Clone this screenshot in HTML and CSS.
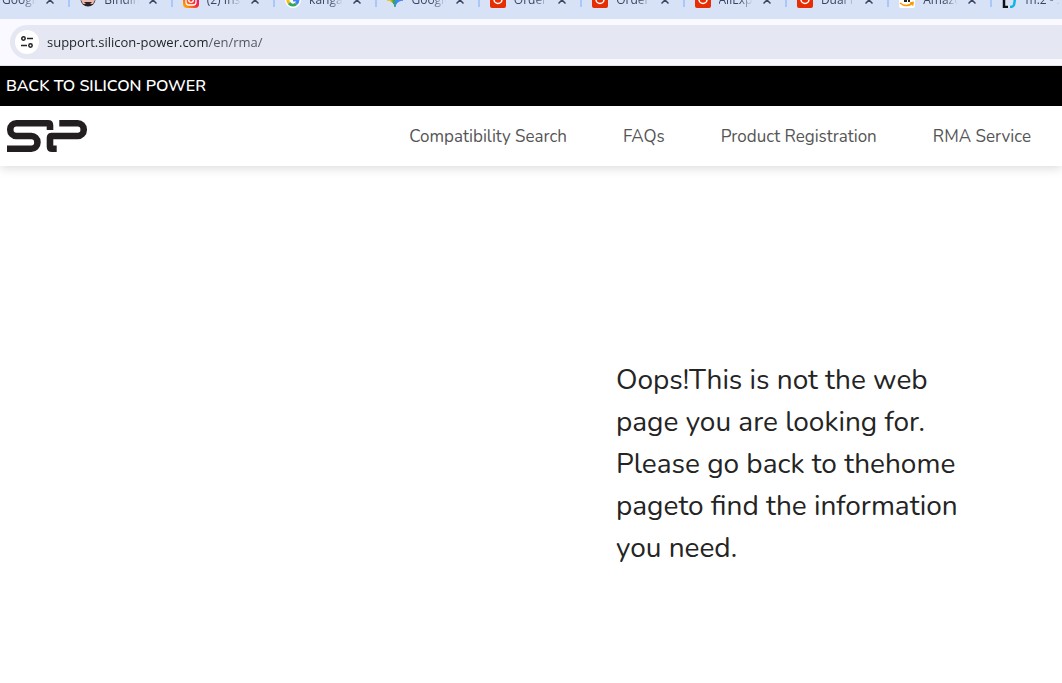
FILE: index.html
```html
<!DOCTYPE html>
<html lang="en">
<head>
    <meta charset="UTF-8">
    <meta name="viewport" content="width=device-width, initial-scale=1">
    <title>Silicon Power Support</title>
    <link rel="stylesheet" href="styles.css">
</head>
<body>

<div class="browser">
    <div class="tabs">
        <div class="tab">
            <span class="tab-icon"></span>
            <span class="tab-title">Google</span>
            <button class="tab-close" aria-label="Close tab"><svg viewBox="0 0 8 8"><path d="M0.5 0.5l7 7M7.5 0.5l-7 7"/></svg></button>
        </div>
        <div class="tab">
            <svg class="tab-icon" viewBox="0 0 16 16"><circle cx="8" cy="7" r="7.5" fill="#2b2226"/><path d="M1 8h14l-2 4H3z" fill="#e8b9ac"/><path d="M4 10h8l-2 2H6z" fill="#2b2226"/></svg>
            <span class="tab-title">Binding</span>
            <button class="tab-close" aria-label="Close tab"><svg viewBox="0 0 8 8"><path d="M0.5 0.5l7 7M7.5 0.5l-7 7"/></svg></button>
        </div>
        <div class="tab">
            <svg class="tab-icon" viewBox="0 0 16 16">
                <defs><linearGradient id="insta" x1="0" y1="1" x2="1" y2="0"><stop offset="0" stop-color="#ffc400"/><stop offset="0.5" stop-color="#ff2b2b"/><stop offset="1" stop-color="#d000c8"/></linearGradient></defs>
                <rect width="16" height="16" rx="4" fill="url(#insta)"/>
                <rect x="3" y="3" width="10" height="10" rx="3" fill="none" stroke="#fff" stroke-width="1.3"/>
                <circle cx="8" cy="8" r="2.3" fill="none" stroke="#fff" stroke-width="1.3"/>
            </svg>
            <span class="tab-title">(2) Instagram</span>
            <button class="tab-close" aria-label="Close tab"><svg viewBox="0 0 8 8"><path d="M0.5 0.5l7 7M7.5 0.5l-7 7"/></svg></button>
        </div>
        <div class="tab">
            <svg class="tab-icon" viewBox="0 0 16 16">
                <circle cx="8" cy="8" r="8" fill="#fff"/>
                <g fill="none" stroke-width="3">
                    <path d="M3.5 5.5a5 5 0 0 1 8-2" stroke="#ea4335"/>
                    <path d="M3.5 5.5a5 5 0 0 0 .5 5.5" stroke="#fbbc05"/>
                    <path d="M4 11a5 5 0 0 0 7 1" stroke="#34a853"/>
                    <path d="M11 12a5 5 0 0 0 2-4H8" stroke="#4285f4"/>
                </g>
            </svg>
            <span class="tab-title">kangaroo</span>
            <button class="tab-close" aria-label="Close tab"><svg viewBox="0 0 8 8"><path d="M0.5 0.5l7 7M7.5 0.5l-7 7"/></svg></button>
        </div>
        <div class="tab">
            <svg class="tab-icon" viewBox="0 0 16 16">
                <defs><linearGradient id="gem"><stop offset="0.2" stop-color="#fbbc05"/><stop offset="0.4" stop-color="#34a853"/><stop offset="0.6" stop-color="#4285f4"/></linearGradient></defs>
                <path d="M8 0Q9 7 16 8Q9 9 8 15Q7 9 0 8Q7 7 8 0z" fill="url(#gem)" stroke="url(#gem)"/>
            </svg>
            <span class="tab-title">Google</span>
            <button class="tab-close" aria-label="Close tab"><svg viewBox="0 0 8 8"><path d="M0.5 0.5l7 7M7.5 0.5l-7 7"/></svg></button>
        </div>
        <div class="tab">
            <svg class="tab-icon" viewBox="0 0 16 16"><rect width="16" height="16" rx="2" fill="#e62e04"/><path d="M4 6v1.500a4 4 0 0 0 8 0V6" fill="none" stroke="#fff" stroke-width="1.5"/></svg>
            <span class="tab-title">Order Details</span>
            <button class="tab-close" aria-label="Close tab"><svg viewBox="0 0 8 8"><path d="M0.5 0.5l7 7M7.5 0.5l-7 7"/></svg></button>
        </div>
        <div class="tab">
            <svg class="tab-icon" viewBox="0 0 16 16"><rect width="16" height="16" rx="2" fill="#e62e04"/><path d="M4 6v1.500a4 4 0 0 0 8 0V6" fill="none" stroke="#fff" stroke-width="1.5"/></svg>
            <span class="tab-title">Order Details</span>
            <button class="tab-close" aria-label="Close tab"><svg viewBox="0 0 8 8"><path d="M0.5 0.5l7 7M7.5 0.5l-7 7"/></svg></button>
        </div>
        <div class="tab">
            <svg class="tab-icon" viewBox="0 0 16 16"><rect width="16" height="16" rx="2" fill="#e62e04"/><path d="M4 6v1.500a4 4 0 0 0 8 0V6" fill="none" stroke="#fff" stroke-width="1.5"/></svg>
            <span class="tab-title">AliExpress</span>
            <button class="tab-close" aria-label="Close tab"><svg viewBox="0 0 8 8"><path d="M0.5 0.5l7 7M7.5 0.5l-7 7"/></svg></button>
        </div>
        <div class="tab">
            <svg class="tab-icon" viewBox="0 0 16 16"><rect width="16" height="16" rx="2" fill="#e62e04"/><path d="M4 6v1.500a4 4 0 0 0 8 0V6" fill="none" stroke="#fff" stroke-width="1.5"/></svg>
            <span class="tab-title">Dual Port</span>
            <button class="tab-close" aria-label="Close tab"><svg viewBox="0 0 8 8"><path d="M0.5 0.5l7 7M7.5 0.5l-7 7"/></svg></button>
        </div>
        <div class="tab">
            <svg class="tab-icon" viewBox="0 0 16 16"><rect width="16" height="16" rx="2" fill="#fff"/><path d="M5 5h3v5H5zM9 5h2v5H9z" fill="#222"/><path d="M1 11q6 5 13 0M11 11l3-.5-.5 3" fill="none" stroke="#f90" stroke-width="1.6"/></svg>
            <span class="tab-title">Amazon</span>
            <button class="tab-close" aria-label="Close tab"><svg viewBox="0 0 8 8"><path d="M0.5 0.5l7 7M7.5 0.5l-7 7"/></svg></button>
        </div>
        <div class="tab">
            <svg class="tab-icon" viewBox="0 0 16 16"><path d="M6 1H2v14h4" fill="none" stroke="#111" stroke-width="2.5"/><path d="M9 1h4v6l-1 6q-1 2-4 2" fill="none" stroke="#14b4e6" stroke-width="2.5"/></svg>
            <span class="tab-title">m.2 - SSD</span>
            <button class="tab-close" aria-label="Close tab"><svg viewBox="0 0 8 8"><path d="M0.5 0.5l7 7M7.5 0.5l-7 7"/></svg></button>
        </div>
    </div>
    <div class="toolbar">
        <div class="address-bar">
            <button class="site-info" aria-label="View site information">
                <svg viewBox="0 0 12 12"><circle cx="2.5" cy="2.5" r="1.7"/><path d="M6 2.5h6M0 9.500h6"/><circle cx="9.5" cy="9.5" r="1.7"/></svg>
            </button>
            <input class="address" type="text" aria-label="Address" value="support.silicon-power.com/en/rma/">
        </div>
    </div>
</div>

<div class="top-bar">
    <a href="#">BACK TO SILICON POWER</a>
</div>

<header class="header">
    <a class="logo" href="#" aria-label="Silicon Power">
        <svg viewBox="0 0 80 32">
            <path d="M43 10V5.3Q43 3.3 41 3.3H9.300a6 6 0 0 0-6 6V10a6 6 0 0 0 6 6H24.400a6 6 0 0 1 6 6V22.700a6 6 0 0 1-6 6H0"/>
            <path d="M52.300 3.3H70.700a6 6 0 0 1 6 6V10a6 6 0 0 1-6 6H45Q43 16 43 18V26.700Q43 28.700 45 28.700H49.700"/>
        </svg>
    </a>
    <nav class="menu">
        <a href="#">Compatibility Search</a>
        <a href="#">FAQs</a>
        <a href="#">Product Registration</a>
        <a href="#">RMA Service</a>
    </nav>
</header>

<main class="content">
    <p class="message">Oops!This is not the web page you are looking for. Please go back to the<a href="#">home page</a>to find the information you need.</p>
</main>

</body>
</html>
```
FILE: styles.css
```css
* {
    box-sizing: border-box;
}

body {
    margin: 0;
    background-color: #fff;
    color: #242424;
    font-family: Nunito, Lato, sans-serif;
    overflow-x: hidden;
}

a {
    color: inherit;
    text-decoration: none;
}

button {
    padding: 0;
    border: none;
    background: none;
}

.browser {
    overflow: hidden;
    font-family: "Segoe UI", "Open Sans", sans-serif;
}

/* only the lower half of the tab strip is in view */
.tabs {
    display: flex;
    align-items: flex-end;
    height: 19px;
    margin: 0 -30px 0 -34px;
    background-color: #d8e2f7;
    overflow: hidden;
}

.tab {
    display: flex;
    flex: 1;
    align-items: center;
    min-width: 0;
    height: 38px;
    padding: 0 14px 0 12px;
    background: linear-gradient(#a8c7fa, #a8c7fa) 0 8px / 2px 18px no-repeat;
}

.tab-icon {
    flex: none;
    width: 16px;
    height: 16px;
    margin-right: 8px;
}

.tab-title {
    flex: 1;
    overflow: hidden;
    white-space: nowrap;
    font-size: 12px;
    line-height: 18px;
    color: #3c4560;
    -webkit-mask-image: linear-gradient(to right, #000 60%, transparent);
    mask-image: linear-gradient(to right, #000 60%, transparent);
}

.tab-close {
    display: flex;
    flex: none;
    margin-left: 10px;
}

.tab-close svg {
    width: 8px;
    height: 8px;
    stroke: #3c4560;
    stroke-width: 1.5;
}

.toolbar {
    padding: 6px 0 6px 10px;
    background-color: #f9f9ff;
    border-bottom: 1px solid #dfe3ea;
}

.address-bar {
    display: flex;
    align-items: center;
    height: 34px;
    padding-left: 5px;
    background-color: #e5e8f3;
    border-radius: 17px 0 0 17px;
}

.site-info {
    display: flex;
    flex: none;
    align-items: center;
    justify-content: center;
    width: 24px;
    height: 24px;
    background-color: #fff;
    border-radius: 50%;
}

.site-info svg {
    width: 12px;
    height: 12px;
    fill: none;
    stroke: #202124;
    stroke-width: 1.5;
}

/* host name is darker than the path */
.address {
    flex: 1;
    margin-left: 8px;
    padding: 0;
    border: none;
    outline: none;
    background: linear-gradient(to right, #202124 162px, #50535f 162px);
    -webkit-background-clip: text;
    background-clip: text;
    color: transparent;
    font-family: inherit;
    font-size: 13px;
}

.top-bar {
    display: flex;
    align-items: center;
    height: 40px;
    padding: 0 6px;
    background-color: #000;
    color: #fff;
    font-size: 16px;
    font-weight: 600;
}

.header {
    display: flex;
    align-items: center;
    justify-content: space-between;
    height: 60px;
    padding: 0 31px 0 7px;
    box-shadow: 0 2px 10px rgba(0, 0, 0, 0.15);
}

.logo {
    display: flex;
}

.logo svg {
    width: 80px;
    height: 32px;
    fill: none;
    stroke: #231f20;
    stroke-width: 6.6;
}

.menu {
    display: flex;
    gap: 56px;
    color: #555;
    font-size: 17px;
}

.content {
    padding: 193px 0 80px 58%;
}

.message {
    max-width: 360px;
    margin: 0;
    font-size: 28px;
    line-height: 42px;
}
```
